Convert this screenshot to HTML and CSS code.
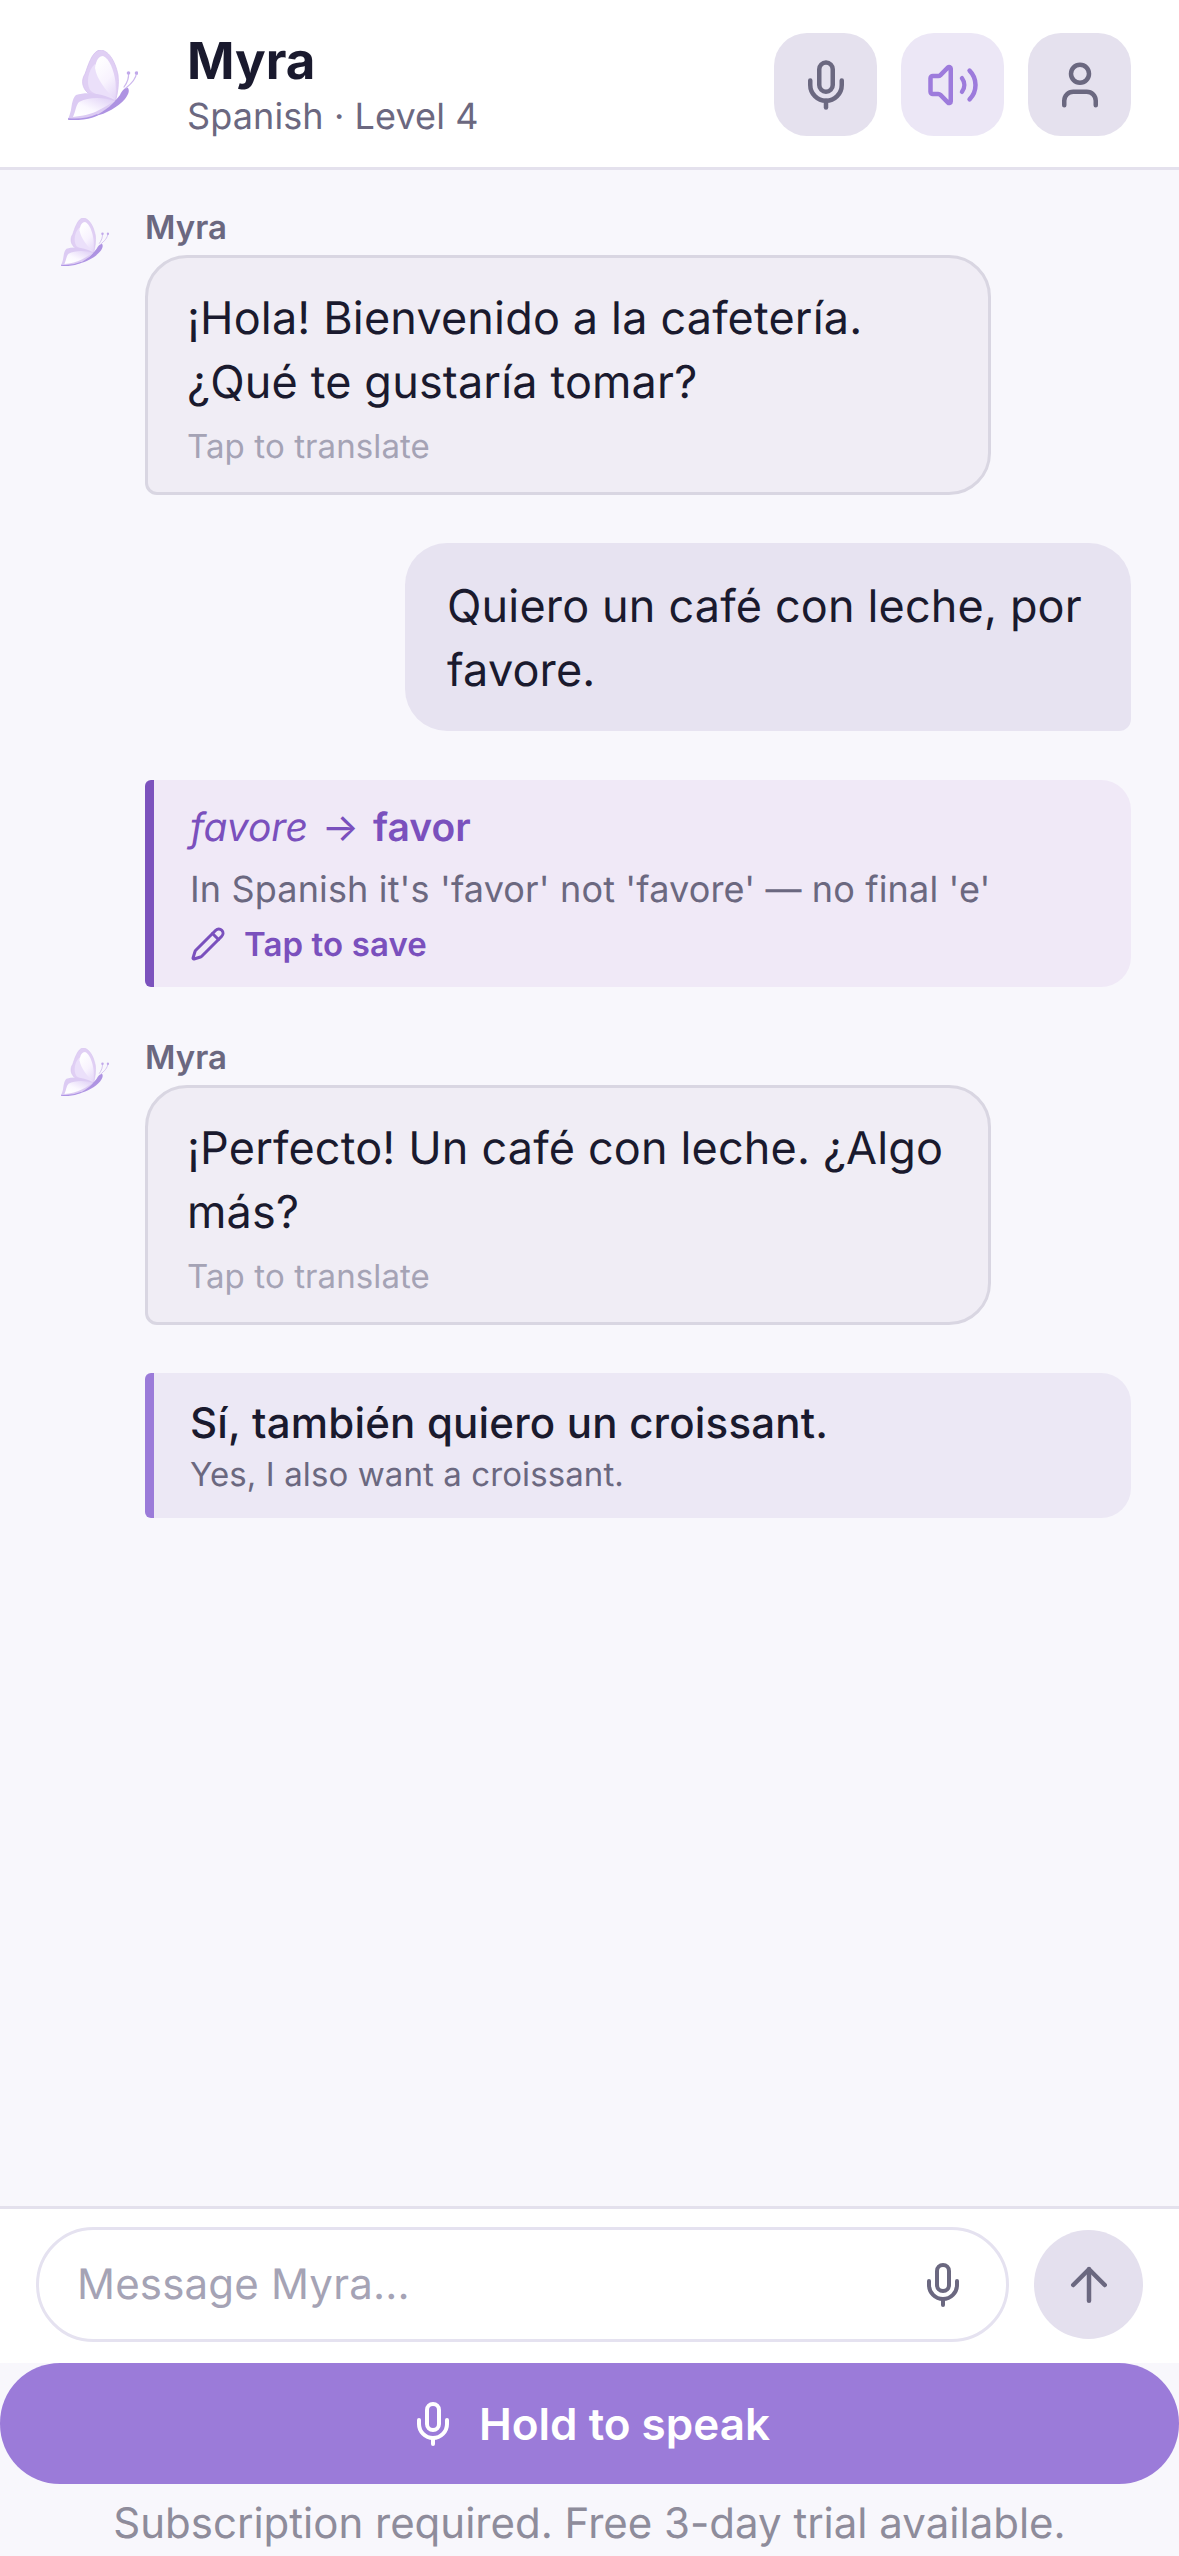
FILE: index.html
```html
<!DOCTYPE html>
<html lang="en">
<head>
<meta charset="utf-8">
<title>Myra</title>
<link rel="stylesheet" href="styles.css">
</head>
<body>
<svg class="defs" width="0" height="0" aria-hidden="true">
  <defs>
    <linearGradient id="wingA" x1="0.3" y1="0" x2="0.8" y2="1">
      <stop offset="0" stop-color="#ffffff"/>
      <stop offset=".55" stop-color="#f8f3fe"/>
      <stop offset="1" stop-color="#e6d9f8"/>
    </linearGradient>
    <linearGradient id="wingB" x1="0.9" y1="0.1" x2="0.1" y2="0.9">
      <stop offset="0" stop-color="#e3d5f7"/>
      <stop offset=".6" stop-color="#fbf8ff"/>
      <stop offset="1" stop-color="#ffffff"/>
    </linearGradient>
    <symbol id="butterfly" viewBox="0 0 70 70">
      <path d="M47.500 51C38 48 27 47 20 43C14 38 13 30 17 24C20 16 24 1 32 0C40 0 47 10 50 25C51 33 50 42 47.500 51Z" fill="#e0cff4" stroke="#d5c1ef" stroke-width=".8"/>
      <path d="M47 50.500C37 47 26 45 22 40C18 33 20 20 27 14C32 18 40 34 47 50.500Z" fill="#ebe0fa"/>
      <path d="M47 50C38 40 29 30 27 18C28 10 31 6 35 6C41 8 46 20 47.500 32C48 40 48 45 47 50Z" fill="url(#wingA)"/>
      <path d="M47 50C35 44 20 41 8 45C4 49 4 55 3 60C2 64 1 67 0 69C8 70 20 68 28 66C36 62 42 56 47 50Z" fill="#dccbf3"/>
      <path d="M46 51C36 47 20 47 11 52C8 55 8 60 5 67C14 66 24 64 31 60C37 57 42 54 46 51Z" fill="url(#wingB)"/>
      <path d="M0 69C10 70 22 68 29 65" fill="none" stroke="#ae94e4" stroke-width="1.500" stroke-linecap="round"/>
      <path d="M60 38C57 37 54 41 52 45C46 53 37 61 27 66C38 64 50 57 57 49C60 45 62 41 60 38Z" fill="#ae93e2"/>
      <path d="M56 37C59 33 61 28 60.500 23M58 38C63 34 68 29 68.500 23" fill="none" stroke="#cdb8ee" stroke-width="1.200" stroke-linecap="round"/>
      <circle cx="60.500" cy="23" r="1.800" fill="#c1a9ea"/>
      <circle cx="68.500" cy="23" r="1.800" fill="#c1a9ea"/>
    </symbol>
    <symbol id="mic" viewBox="0 0 24 24">
      <path d="M12 19v3"/>
      <path d="M19 10v2a7 7 0 0 1-14 0v-2"/>
      <rect x="9" y="2" width="6" height="13" rx="3"/>
    </symbol>
  </defs>
</svg>
<div class="app">
  <header class="topbar">
    <svg class="logo"><use href="#butterfly"/></svg>
    <div class="title">
      <div class="name">Myra</div>
      <div class="sub">Spanish · Level 4</div>
    </div>
    <div class="actions">
      <button class="tool"><svg class="ico54"><use href="#mic"/></svg></button>
      <button class="tool tool-on">
        <svg class="ico54" viewBox="0 0 24 24">
          <path d="M11 4.702a.705.705 0 0 0-1.203-.498L6.413 7.587A1.4 1.4 0 0 1 5.416 8H3a1 1 0 0 0-1 1v6a1 1 0 0 0 1 1h2.416a1.4 1.4 0 0 1 .997.413l3.383 3.384A.705.705 0 0 0 11 19.298z"/>
          <path d="M16 9a5 5 0 0 1 0 6"/>
          <path d="M19.364 18.364a9 9 0 0 0 0-12.728"/>
        </svg>
      </button>
      <button class="tool">
        <svg class="ico54" viewBox="0 0 24 24">
          <path d="M19 21v-2a4 4 0 0 0-4-4H9a4 4 0 0 0-4 4v2"/>
          <circle cx="12" cy="7" r="4"/>
        </svg>
      </button>
    </div>
  </header>

  <main class="chat">
    <section class="ai">
      <svg class="avatar"><use href="#butterfly"/></svg>
      <div class="ai-col">
        <div class="who">Myra</div>
        <div class="bubble">
          <p class="msg">¡Hola! Bienvenido a la cafetería. ¿Qué te gustaría tomar?</p>
          <div class="hint">Tap to translate</div>
        </div>
      </div>
    </section>

    <div class="mine"><p class="msg">Quiero un café con leche, por favore.</p></div>

    <section class="note correction">
      <div class="fix"><em>favore</em><span class="arrow">→</span><strong>favor</strong></div>
      <div class="why">In Spanish it's 'favor' not 'favore' — no final 'e'</div>
      <div class="save">
        <svg class="ico36" viewBox="0 0 24 24">
          <path d="M21.174 6.812a1 1 0 0 0-3.986-3.987L3.842 16.174a2 2 0 0 0-.5.83l-1.321 4.352a.5.5 0 0 0 .623.622l4.353-1.32a2 2 0 0 0 .83-.497z"/>
          <path d="m15 5 4 4"/>
        </svg>
        <span>Tap to save</span>
      </div>
    </section>

    <section class="ai">
      <svg class="avatar"><use href="#butterfly"/></svg>
      <div class="ai-col">
        <div class="who">Myra</div>
        <div class="bubble">
          <p class="msg">¡Perfecto! Un café con leche. ¿Algo más?</p>
          <div class="hint">Tap to translate</div>
        </div>
      </div>
    </section>

    <section class="note suggestion">
      <div class="es">Sí, también quiero un croissant.</div>
      <div class="en">Yes, I also want a croissant.</div>
    </section>
  </main>

  <div class="composer">
    <div class="field">
      <span class="placeholder">Message Myra...</span>
      <svg class="ico48"><use href="#mic"/></svg>
    </div>
    <button class="send">
      <svg class="ico54" viewBox="0 0 24 24"><path d="m5 12 7-7 7 7"/><path d="M12 19V5"/></svg>
    </button>
  </div>

  <button class="hold">
    <svg class="ico48"><use href="#mic"/></svg>
    <span>Hold to speak</span>
  </button>
  <div class="foot">Subscription required. Free 3-day trial available.</div>
</div>
</body>
</html>
```

FILE: styles.css
```css
* { box-sizing: border-box; }
html, body { margin: 0; padding: 0; }
body {
  width: 1179px;
  height: 2556px;
  overflow: hidden;
  background: #f8f7fc;
  font-family: Inter, "Noto Sans", sans-serif;
  font-optical-sizing: none;
  text-rendering: geometricPrecision;
  color: #1a1a2e;
}
p { margin: 0; }
button { border: 0; padding: 0; font: inherit; }
.defs { position: absolute; }

.ico54, .ico48, .ico36 {
  fill: none;
  stroke: currentColor;
  stroke-width: 2;
  stroke-linecap: round;
  stroke-linejoin: round;
  flex: none;
  display: block;
}
.ico54 { width: 54px; height: 54px; }
.ico48 { width: 48px; height: 48px; }
.ico36 { width: 36px; height: 36px; }

.app { display: flex; flex-direction: column; height: 2556px; }

.topbar {
  height: 170px;
  flex: none;
  display: flex;
  align-items: center;
  background: #fff;
  border-bottom: 3px solid #e4e1ed;
  padding: 2px 48px 0 68px;
}
.logo { width: 70px; height: 70px; flex: none; }
.title { margin-left: 49px; }
.name { font-size: 51px; font-weight: 700; line-height: 62px; }
.sub { font-size: 36px; line-height: 44px; margin-top: 1px; letter-spacing: .1px; color: #6b6880; }
.actions { margin-left: auto; display: flex; gap: 24px; }
.tool {
  width: 103px;
  height: 103px;
  border-radius: 33px;
  background: #e5e1ee;
  color: #6b6880;
  display: flex;
  align-items: center;
  justify-content: center;
}
.tool-on { background: #ece7f6; color: #9d7bdc; }

.chat {
  flex: 1;
  display: flex;
  flex-direction: column;
  gap: 48px;
  padding: 36px 48px 0 48px;
}
.msg { font-size: 45px; line-height: 64px; letter-spacing: .16px; }

.ai { display: flex; gap: 25px; align-items: flex-start; }
.avatar { width: 48px; height: 48px; flex: none; margin: 12px 11px 0 13px; }
.ai-col { width: 846px; }
.who { font-size: 33px; font-weight: 600; line-height: 43px; height: 49px; color: #6b6880; }
.bubble {
  background: #f0edf5;
  border: 3px solid #d9d6e2;
  border-radius: 42px 42px 42px 12px;
  padding: 28px 39px 25px;
  height: 240px;
}
.hint { font-size: 33px; line-height: 40px; margin-top: 12px; letter-spacing: .1px; color: #a5a3b5; }

.mine {
  align-self: flex-end;
  width: 726px;
  height: 188px;
  background: #e7e3f1;
  border-radius: 42px 42px 12px 42px;
  padding: 31px 42px;
}

.note {
  margin-left: 97px;
  border-left: 9px solid;
  border-radius: 6px 30px 30px 6px;
  padding-left: 36px;
}
.correction {
  height: 207px;
  margin-top: 1px;
  margin-bottom: 1px;
  background: #f0e9f7;
  border-left-color: #7c52bd;
  padding-top: 20px;
}
.fix { font-size: 39px; line-height: 56px; color: #7a50bd; }
.fix em { font-style: italic; }
.fix strong { font-weight: 600; }
.arrow { margin: 0 14px; }
.why { font-size: 36px; line-height: 44px; margin-top: 11px; letter-spacing: .15px; color: #6b6880; }
.save {
  display: flex;
  align-items: center;
  gap: 18px;
  margin-top: 10px;
  color: #7a50bd;
  font-size: 33px;
  font-weight: 600;
  line-height: 46px;
  letter-spacing: .1px;
}

.suggestion {
  height: 145px;
  background: #ece8f5;
  border-left-color: #9b7bd9;
  padding-top: 26px;
}
.es { font-size: 42px; font-weight: 500; line-height: 50px; letter-spacing: .2px; }
.en { font-size: 33px; line-height: 42px; margin-top: 4px; letter-spacing: .1px; color: #6b6880; }

.composer {
  flex: none;
  height: 157px;
  background: #fff;
  border-top: 3px solid #e4e1ed;
  padding: 18px 36px 0;
  display: flex;
  gap: 25px;
  align-items: flex-start;
}
.field {
  flex: 1;
  height: 115px;
  border: 3px solid #e5e2f0;
  border-radius: 58px;
  display: flex;
  align-items: center;
  justify-content: space-between;
  padding: 0 39px 0 38px;
  color: #6b6880;
}
.placeholder { font-size: 42px; letter-spacing: .2px; color: #a5a3b5; }
.send {
  width: 109px;
  height: 109px;
  margin-top: 3px;
  border-radius: 50%;
  background: #e4e0ee;
  color: #6b6880;
  display: flex;
  align-items: center;
  justify-content: center;
}

.hold {
  flex: none;
  height: 121px;
  width: 1179px;
  border-radius: 60px;
  background: #9b7bd9;
  color: #fff;
  display: flex;
  align-items: center;
  justify-content: center;
  gap: 22px;
  font-size: 44px;
  font-weight: 600;
}
.foot {
  flex: none;
  height: 72px;
  font-size: 42px;
  line-height: 80px;
  text-align: center;
  color: #8e8c9b;
}
```
